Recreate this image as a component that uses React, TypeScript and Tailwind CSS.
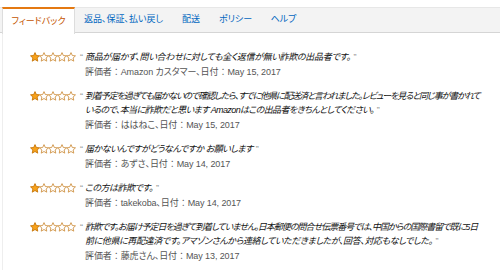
import React from "react";

// tab widths follow the original's spacing
const tabs = [
  { label: "返品、保証、払い戻し", w: "w-[97px]" },
  { label: "配送", w: "w-[38px]" },
  { label: "ポリシー", w: "w-[51px]" },
  { label: "ヘルプ", w: "w-[45px]" },
];

// each line carries its own tracking so the line breaks land where the original ones do
const reviews = [
  {
    lines: [["商品が届かず、問い合わせに対しても全く返信が無い詐欺の出品者です。", "tracking-[-0.3px]"]],
    who: "Amazon カスタマー",
    date: "May 15, 2017",
  },
  {
    lines: [
      ["到着予定を過ぎても届かないので確認したら、すでに他県に配送済と言われました。レビューを見ると同じ事が書かれて", "tracking-[-1.1px]"],
      ["いるので、本当に詐欺だと思います Amazonはこの出品者をきちんとしてください。", "tracking-[-0.6px]"],
    ],
    who: "ははねこ",
    date: "May 15, 2017",
  },
  {
    lines: [["届かないんですがどうなんですか お願いします", "tracking-[-0.5px]"]],
    who: "あずさ",
    date: "May 14, 2017",
  },
  {
    lines: [["この方は詐欺です。", "tracking-[-0.5px]"]],
    who: "takekoba",
    date: "May 14, 2017",
  },
  {
    lines: [
      ["詐欺です。お届け予定日を過ぎて到着していません。日本郵便の問合せ伝票番号では、中国からの国際書留で既に5日", "tracking-[-1px]"],
      ["前に他県に再配達済です。アマゾンさんから連絡していただきましたが、回答、対応もなしでした。", "tracking-[-0.4px]"],
    ],
    who: "藤虎さん",
    date: "May 13, 2017",
  },
];

function Star({ filled }: { filled: boolean }) {
  return (
    <svg width="10" height="10" viewBox="1.5 2 21 20" className="shrink-0 -mr-px">
      <path
        d="M12 2.8l2.8 6.1 6.6.7-5 4.5 1.4 6.6L12 17.3l-5.8 3.4 1.4-6.6-5-4.5 6.6-.7z"
        fill={filled ? "#f7a21b" : "#ffffff"}
        stroke={filled ? "#c67508" : "#cf9446"}
        strokeWidth="1.9"
        strokeLinejoin="round"
      />
    </svg>
  );
}

function Colon() {
  return <span className="[font-feature-settings:normal] tracking-normal">：</span>;
}

export default function App() {
  return (
    <div className="w-[500px] h-[270px] bg-white overflow-hidden pt-[7px] font-['Liberation_Sans','Noto_Sans_CJK_JP',sans-serif]">
      {/* TABS */}
      <div className="flex h-[26px] bg-[#f3f3f3] border-t border-[#e7e7e7] border-b border-b-[#d5d5d5] text-[9px] [font-feature-settings:'palt']">
        <div className="ml-[2px] w-[73px] -mt-px -mb-px h-[27px] flex items-center justify-center bg-white border-t-2 border-t-[#e47911] border-x border-x-[#ddd] text-[#c45500]">
          フィードバック
        </div>
        {tabs.map((t) => (
          <div key={t.label} className={`${t.w} flex items-center justify-center text-[#0066c0]`}>
            {t.label}
          </div>
        ))}
      </div>

      {/* REVIEWS */}
      <div className="ml-[2px] h-full border-l border-[#eeeeee] pl-[27px] pt-[17px] flex flex-col gap-[10px]">
        {reviews.map((r, i) => (
          <div key={i} className="flex">
            <div className="flex w-[50px] h-[14px] items-center">
              {[0, 1, 2, 3, 4].map((s) => (
                <Star key={s} filled={s === 0} />
              ))}
            </div>
            <div className="flex flex-col">
              <div className="pl-[5px] text-[9px] leading-[14px] italic text-[#111] whitespace-nowrap [font-feature-settings:'palt']">
                {r.lines.map(([l, tr], j) => (
                  <div key={j} className={tr}>
                    {j === 0 && (
                      <span className="inline-block w-[5px] -ml-[5px] text-[#999] not-italic tracking-normal">“</span>
                    )}
                    {l}
                    {j === r.lines.length - 1 && (
                      <span className="text-[#999] not-italic ml-[3px] tracking-normal">”</span>
                    )}
                  </div>
                ))}
              </div>
              <div className="pl-[5px] mt-px text-[9px] leading-[14px] text-[#555] whitespace-nowrap tracking-[-0.1px] [font-feature-settings:'palt']">
                評価者<Colon />{r.who}、日付<Colon />{r.date}
              </div>
            </div>
          </div>
        ))}
      </div>
    </div>
  );
}
